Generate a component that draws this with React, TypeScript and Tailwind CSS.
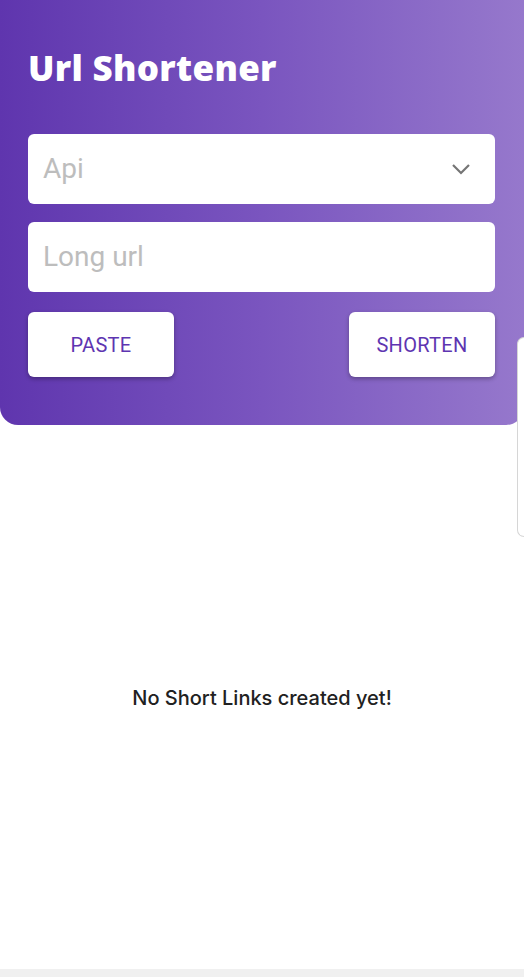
export default function App() {
  return (
    <div className="relative h-[977px] w-[524px] overflow-hidden bg-white font-['Roboto',sans-serif]">
      <div className="rounded-b-[18px] bg-gradient-to-r from-[#5f35ae] via-[#7a55bf] to-[#9678cc] pb-[48px] pl-[28px] pr-[29px] pt-[46px]">
        <h1 className="font-['Open_Sans',sans-serif] text-[35px] font-extrabold leading-[44px] tracking-[0.3px] text-white">Url Shortener</h1>
        <div className="mt-[44px] flex h-[70px] items-center justify-between rounded-[6px] bg-white pl-[15px] pr-[24px]">
          <span className="text-[28px] text-[#bdbdbd]">Api</span>
          <svg width="20" height="12" viewBox="0 0 20 12" fill="none">
            <path d="M2 2l8 8 8-8" stroke="#757575" strokeWidth="2.2" />
          </svg>
        </div>
        <div className="mt-[18px] flex h-[70px] items-center rounded-[6px] bg-white pl-[15px]">
          <span className="text-[28px] text-[#bdbdbd]">Long url</span>
        </div>
        <div className="mt-[20px] flex justify-between">
          <button className="h-[65px] w-[146px] rounded-[6px] bg-white text-[20px] tracking-[0.3px] text-[#5e35b1] shadow-[0_2px_4px_rgba(0,0,0,0.3)]">PASTE</button>
          <button className="h-[65px] w-[146px] rounded-[6px] bg-white text-[20px] tracking-[0.3px] text-[#5e35b1] shadow-[0_2px_4px_rgba(0,0,0,0.3)]">SHORTEN</button>
        </div>
      </div>
      <div className="absolute right-0 top-[337px] h-[200px] w-[7px] rounded-l-[8px] border border-r-0 border-[#d6d6d6] bg-white" />
      <div className="mt-[258px] text-center font-['Inter',sans-serif] text-[20px] font-medium text-[#212121]">No Short Links created yet!</div>
      <div className="absolute bottom-0 left-0 h-[8px] w-full bg-[#f0f0f0]" />
    </div>
  );
}
